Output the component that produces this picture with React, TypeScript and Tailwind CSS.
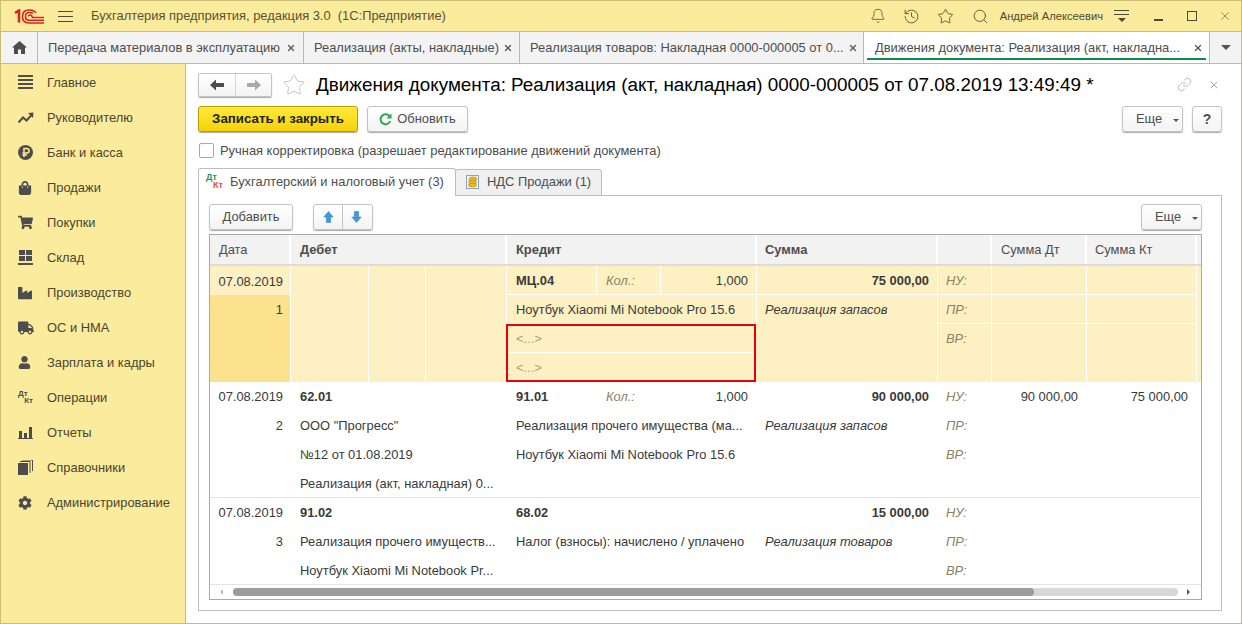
import { Bell, History, Link, Search, Star, X } from "lucide-react";
import { FaCog, FaIndustry, FaShoppingBag, FaShoppingCart, FaTruck, FaUser } from "react-icons/fa";
import type { ReactNode } from "react";

const cols = "grid grid-cols-[81px_78px_57px_81px_90px_64px_96px_181px_54px_95px_110px_1fr]";
const line = "flex items-center px-[9px] whitespace-nowrap overflow-hidden";
const lineR = "flex items-center justify-end pr-[8px] whitespace-nowrap";
const dateCell = "flex items-center justify-end pr-[8px] whitespace-nowrap";

function Bars() {
  return (
    <svg width="15" height="15" viewBox="0 0 15 15" fill="#4d4d4d">
      <rect x="0" y="0" width="15" height="2" />
      <rect x="0" y="4" width="15" height="2" />
      <rect x="0" y="8" width="15" height="2" />
      <rect x="0" y="12" width="15" height="2" />
    </svg>
  );
}

function Trend() {
  return (
    <svg width="16" height="12" viewBox="0 0 16 12" fill="none" stroke="#4d4d4d" strokeWidth="2">
      <path d="M0.5 10.5 L5 5.5 L8.5 8.5 L14 2.5" />
      <path d="M10 1 L15.5 0.5 L15 6 Z" fill="#4d4d4d" stroke="none" />
    </svg>
  );
}

function Ruble() {
  return (
    <svg width="15" height="15" viewBox="0 0 15 15">
      <circle cx="7.5" cy="7.5" r="7.5" fill="#4d4d4d" />
      <path d="M6 12 V3.5 H8.8 a2.2 2.2 0 0 1 0 4.6 H4.5 M4.5 10 H9" fill="none" stroke="#fbeb9d" strokeWidth="1.5" />
    </svg>
  );
}

function Warehouse() {
  return (
    <svg width="15" height="15" viewBox="0 0 15 15" fill="#4d4d4d">
      <rect x="1" y="0" width="6" height="5" />
      <rect x="8" y="0" width="6" height="5" />
      <rect x="1" y="6" width="6" height="5" />
      <rect x="8" y="6" width="6" height="5" />
      <rect x="0" y="13" width="15" height="2" />
    </svg>
  );
}

function Reports() {
  return (
    <svg width="15" height="13" viewBox="0 0 15 13" fill="#4d4d4d">
      <rect x="1" y="5" width="3" height="7" />
      <rect x="6" y="7" width="3" height="5" />
      <rect x="11" y="1" width="3" height="11" />
      <rect x="0" y="12" width="15" height="1" />
    </svg>
  );
}

function Books() {
  return (
    <svg width="15" height="15" viewBox="0 0 15 15">
      <rect x="0" y="3" width="10" height="12" fill="#4d4d4d" />
      <path d="M2 1.5 H12 V13 M4 0 H14.5 V11" fill="none" stroke="#4d4d4d" />
    </svg>
  );
}

function DtKtGray() {
  return (
    <div className="w-[15px] h-[15px] relative font-bold text-[8px] leading-none text-[#4d4d4d]">
      <span className="absolute left-0 top-0">Дт</span>
      <span className="absolute right-0 bottom-0">Кт</span>
    </div>
  );
}

function DtKtColor() {
  return (
    <div className="w-[17px] h-[17px] relative text-[9px] font-bold leading-none">
      <span className="absolute left-0 top-0 text-[#1d9a4e]">Дт</span>
      <span className="absolute right-0 bottom-0 text-[#e04b4b]">Кт</span>
    </div>
  );
}

function Logo() {
  return (
    <svg width="30" height="15" viewBox="0 0 30 15" fill="none" stroke="#d8231f" strokeWidth="1.6">
      <path d="M1 4 L5 1.5 V13.5" strokeWidth="2.6" />
      <path d="M22 4 C20 1 17 1 15 1 C10.5 1 8.5 4 8.5 7.5 C8.5 11 10.5 14 15 14 H30" />
      <path d="M19 4.5 C18 3.5 16.5 3.5 15 3.5 C12.5 3.5 11.5 5.5 11.5 7.5 C11.5 9.5 12.5 11.3 15 11.3 H30" />
      <path d="M14.5 7.5 C14.5 6.5 15 6 16 6 C17 6 18 6.5 18.5 8.5 H30" />
    </svg>
  );
}

function ArrowH({ dir, color }: { dir: "left" | "right"; color: string }) {
  return (
    <svg width="14" height="12" viewBox="0 0 14 12" fill={color}>
      {dir === "left" ? (
        <path d="M0 6 L6 0.5 V4 H14 V8 H6 V11.5 Z" />
      ) : (
        <path d="M14 6 L8 0.5 V4 H0 V8 H8 V11.5 Z" />
      )}
    </svg>
  );
}

function ArrowV({ dir }: { dir: "up" | "down" }) {
  return (
    <svg width="11" height="12" viewBox="0 0 12 14" fill="#3d9bdc" stroke="#2a7fbc" strokeWidth="0.6">
      {dir === "up" ? (
        <path d="M6 0.5 L11.5 7 H8.5 V13.5 H3.5 V7 H0.5 Z" />
      ) : (
        <path d="M6 13.5 L11.5 7 H8.5 V0.5 H3.5 V7 H0.5 Z" />
      )}
    </svg>
  );
}

function Refresh() {
  return (
    <svg width="13" height="13" viewBox="0 0 13 13" fill="none">
      <path d="M10.8 3.5 A5 5 0 1 0 11.3 8" stroke="#2ea84b" strokeWidth="2" />
      <path d="M12.5 0.5 V5.5 H7.5 Z" fill="#2ea84b" />
    </svg>
  );
}

function Coins() {
  return (
    <svg width="13" height="14" viewBox="0 0 13 14">
      <rect x="0.5" y="0.5" width="12" height="13" fill="#eef3f8" stroke="#8fa3b5" />
      <ellipse cx="7" cy="4" rx="4" ry="2" fill="#e8bb22" stroke="#a67d0c" strokeWidth="0.5" />
      <ellipse cx="6.5" cy="7" rx="4" ry="2" fill="#e8bb22" stroke="#a67d0c" strokeWidth="0.5" />
      <ellipse cx="6.5" cy="10" rx="4" ry="2" fill="#e8bb22" stroke="#a67d0c" strokeWidth="0.5" />
    </svg>
  );
}

function Btn({ className, children }: { className: string; children: ReactNode }) {
  return (
    <div
      className={`flex items-center justify-center rounded-[3px] border border-[#c4c4c4] bg-gradient-to-b from-white to-[#f3f3f3] shadow-[0_1px_1px_#a8a8a8] text-[#4d4d4d] ${className}`}
    >
      {children}
    </div>
  );
}

function More({ className }: { className: string }) {
  return (
    <Btn className={`gap-[11px] pl-[10px] ${className}`}>
      <span>Еще</span>
      <span className="mt-[2px] w-0 h-0 border-x-[3px] border-x-transparent border-t-[3px] border-t-[#555]" />
    </Btn>
  );
}

const menu: { label: string; icon: ReactNode }[] = [
  { label: "Главное", icon: <Bars /> },
  { label: "Руководителю", icon: <Trend /> },
  { label: "Банк и касса", icon: <Ruble /> },
  { label: "Продажи", icon: <FaShoppingBag size={14} color="#4d4d4d" /> },
  { label: "Покупки", icon: <FaShoppingCart size={15} color="#4d4d4d" /> },
  { label: "Склад", icon: <Warehouse /> },
  { label: "Производство", icon: <FaIndustry size={14} color="#4d4d4d" /> },
  { label: "ОС и НМА", icon: <FaTruck size={16} color="#4d4d4d" /> },
  { label: "Зарплата и кадры", icon: <FaUser size={13} color="#4d4d4d" /> },
  { label: "Операции", icon: <DtKtGray /> },
  { label: "Отчеты", icon: <Reports /> },
  { label: "Справочники", icon: <Books /> },
  { label: "Администрирование", icon: <FaCog size={14} color="#4d4d4d" /> },
];

const tabs = [
  { label: "Передача материалов в эксплуатацию", w: "w-[266px] pr-[7px]" },
  { label: "Реализация (акты, накладные)", w: "w-[216px] pr-[6px]" },
  { label: "Реализация товаров: Накладная 0000-000005 от 0...", w: "w-[344px] pr-[5px]" },
];

type Line = { deb: string; cred: string; qty?: string; sum?: string; note: string; tag: string; dt?: string; kt?: string };

const rows: { n: string; lines: Line[] }[] = [
  {
    n: "2",
    lines: [
      { deb: "62.01", cred: "91.01", qty: "1,000", sum: "90 000,00", note: "", tag: "НУ:", dt: "90 000,00", kt: "75 000,00" },
      { deb: 'ООО "Прогресс"', cred: "Реализация прочего имущества (ма...", note: "Реализация запасов", tag: "ПР:" },
      { deb: "№12 от 01.08.2019", cred: "Ноутбук Xiaomi Mi Notebook Pro 15.6", note: "", tag: "ВР:" },
      { deb: "Реализация (акт, накладная) 0...", cred: "", note: "", tag: "" },
    ],
  },
  {
    n: "3",
    lines: [
      { deb: "91.02", cred: "68.02", sum: "15 000,00", note: "", tag: "НУ:" },
      { deb: "Реализация прочего имуществ...", cred: "Налог (взносы): начислено / уплачено", note: "Реализация товаров", tag: "ПР:" },
      { deb: "Ноутбук Xiaomi Mi Notebook Pr...", cred: "", note: "", tag: "ВР:" },
    ],
  },
];

function PlainLine({ l, i, n, last }: { l: Line; i: number; n: string; last: boolean }) {
  const h = last ? "h-[28px] pt-px" : "h-[29px]";
  return (
    <div className={`${cols} ${h}`}>
      <div className={dateCell}>{i === 0 ? "07.08.2019" : i === 1 ? n : ""}</div>
      <div className={`${line} col-span-3 ${i === 0 ? "font-bold" : ""}`}>{l.deb}</div>
      {i === 0 ? (
        <>
          <div className={`${line} font-bold`}>{l.cred}</div>
          <div className={`${line} italic text-[#8a8262]`}>{l.qty ? "Кол.:" : ""}</div>
          <div className={`${line} justify-end`}>{l.qty}</div>
          <div className={`${line} justify-end font-bold`}>{l.sum}</div>
        </>
      ) : (
        <>
          <div className={`${line} col-span-3`}>{l.cred}</div>
          <div className="flex items-center pl-[8px] italic whitespace-nowrap">{l.note}</div>
        </>
      )}
      <div className="flex items-center pl-2 italic text-[#8a8262]">{l.tag}</div>
      <div className={`${line} justify-end`}>{l.dt}</div>
      <div className={`${line} justify-end`}>{l.kt}</div>
    </div>
  );
}

export default function App() {
  return (
    <div className="w-[1242px] h-[624px] overflow-hidden flex flex-col bg-white border border-[#c9bc74] font-['Liberation_Sans',Arial,sans-serif] text-[12.9px] text-[#3a3a3a]">
      {/* заголовок окна */}
      <div className="h-[31px] shrink-0 flex items-center bg-[#fbeb9d] border-b border-[#c9bc74] text-[#5a5230]">
        <div className="ml-[13px] w-[30px]">
          <Logo />
        </div>
        <svg className="ml-[14px]" width="15" height="13" viewBox="0 0 15 13" stroke="#4d4a36">
          <path d="M0 1.5 H15 M0 6.5 H15 M0 11.5 H15" />
        </svg>
        <span className="ml-[18px] whitespace-pre">Бухгалтерия предприятия, редакция 3.0  (1С:Предприятие)</span>
        <div className="ml-auto flex items-center text-[#4d4a36]">
          <Bell size={16} strokeWidth={1.2} />
          <History size={17} strokeWidth={1.2} className="ml-[17px]" />
          <Star size={17} strokeWidth={1.2} className="ml-[17px]" />
          <Search size={17} strokeWidth={1.2} className="ml-[18px]" />
          <span className="ml-[11px] text-[11.2px]">Андрей Алексеевич</span>
          <div className="ml-[11px] w-[15px] flex flex-col items-center gap-[3px]">
            <div className="w-[15px] h-px bg-[#4d4a36]" />
            <div className="w-[15px] h-px bg-[#4d4a36]" />
            <div className="w-0 h-0 border-x-[4px] border-x-transparent border-t-[4px] border-t-[#4d4a36]" />
          </div>
          <div className="ml-[25px] mt-[8px] w-[9px] h-[2px] bg-[#4d4a36]" />
          <div className="ml-[24px] w-[10px] h-[10px] border-[1.5px] border-[#4d4a36]" />
          <X size={14} strokeWidth={1} className="ml-[21px] mr-[9px]" />
        </div>
      </div>

      {/* вкладки */}
      <div className="h-[32px] shrink-0 flex bg-[#f3f3f3] border-b border-[#b8b8b8] text-[#4d4d4d]">
        <div className="w-[37px] flex items-center justify-center border-r border-[#b8b8b8]">
          <svg width="15" height="13" viewBox="0 0 15 13" fill="#4d4d4d">
            <path d="M7.5 0 L15 6.5 H13 V13 H9 V8.5 H6 V13 H2 V6.5 H0 Z" />
          </svg>
        </div>
        {tabs.map((t) => (
          <div key={t.label} className={`${t.w} pl-[10px] flex items-center justify-between border-r border-[#b8b8b8] whitespace-nowrap`}>
            <span>{t.label}</span>
            <X size={10} strokeWidth={3} color="#555" />
          </div>
        ))}
        <div className="w-[345px] relative flex items-center justify-between pl-[11px] pr-[6px] bg-white whitespace-nowrap">
          <span>Движения документа: Реализация (акт, накладна...</span>
          <X size={10} strokeWidth={3} color="#555" />
          <div className="absolute left-[3px] right-[3px] bottom-[3px] h-[2px] bg-[#0b8a4a]" />
        </div>
        <div className="flex-1 flex items-center justify-center border-l border-[#b8b8b8]">
          <div className="w-0 h-0 border-x-[5px] border-x-transparent border-t-[5px] border-t-[#555]" />
        </div>
      </div>

      <div className="flex-1 flex min-h-0">
        {/* левая панель */}
        <div className="w-[185px] shrink-0 bg-[#fbeb9d] border-r border-[#c9bc74] text-[#4a4530] py-px">
          {menu.map((m) => (
            <div key={m.label} className="h-[35px] flex items-center">
              <div className="w-[46px] pl-[17px] flex justify-start">{m.icon}</div>
              <span>{m.label}</span>
            </div>
          ))}
        </div>

        {/* форма */}
        <div className="flex-1 min-w-0 pl-[12px] pr-[19px] pt-[8px] flex flex-col">
          <div className="h-[25px] flex items-center">
            <div className="w-[74px] h-[24px] flex rounded-[2px] border border-[#c4c4c4] bg-gradient-to-b from-white to-[#f3f3f3] shadow-[0_1px_1px_#a8a8a8]">
              <div className="w-[37px] flex items-center justify-center border-r border-[#d4d4d4]">
                <ArrowH dir="left" color="#4d4d4d" />
              </div>
              <div className="flex-1 flex items-center justify-center">
                <ArrowH dir="right" color="#a9a9a9" />
              </div>
            </div>
            <Star size={24} strokeWidth={0.8} color="#b5b5b5" className="ml-[10px]" />
            <h1 className="ml-[10px] pt-px text-[18.85px] font-normal text-black whitespace-nowrap">
              Движения документа: Реализация (акт, накладная) 0000-000005 от 07.08.2019 13:49:49 *
            </h1>
            <Link size={15} strokeWidth={1.1} color="#9a9a9a" className="ml-auto mr-[16px]" />
            <X size={12} strokeWidth={1.1} color="#666" className="mr-[2px]" />
          </div>

          <div className="mt-[9px] h-[26px] flex">
            <div className="w-[160px] flex items-center justify-center rounded-[3px] border border-[#b7a000] bg-gradient-to-b from-[#ffe936] to-[#f5d300] shadow-[0_1px_1px_#a8a8a8] font-bold text-[13.3px] text-[#222]">
              Записать и закрыть
            </div>
            <Btn className="ml-[9px] w-[101px] gap-[5px]">
              <Refresh />
              <span>Обновить</span>
            </Btn>
            <More className="ml-auto w-[61px]" />
            <Btn className="ml-[9px] w-[30px] font-bold text-[14px]">?</Btn>
          </div>

          <div className="mt-[10px] h-[17px] flex items-center text-[#4d4d4d]">
            <div className="w-[15px] h-[15px] ml-[1px] rounded-[2px] border border-[#a9a9a9] bg-white" />
            <span className="ml-[6px]">Ручная корректировка (разрешает редактирование движений документа)</span>
          </div>

          <div className="mt-[9px] h-[28px] flex items-end text-[#4d4d4d] relative z-10">
            <div className="w-[258px] h-[28px] flex items-center pb-[2px] pl-[7px] gap-[7px] bg-white border border-b-0 border-[#bdbdbd] rounded-t-[3px] whitespace-nowrap">
              <DtKtColor />
              <span>Бухгалтерский и налоговый учет (3)</span>
            </div>
            <div className="w-[147px] -ml-px h-[27px] flex items-center pb-px pl-[10px] gap-[8px] bg-[#f0f0f0] border border-[#bdbdbd] rounded-t-[3px] whitespace-nowrap">
              <Coins />
              <span>НДС Продажи (1)</span>
            </div>
          </div>

          <div className="-mt-px h-[416px] shrink-0 border border-[#bdbdbd] pl-[10px] pr-[19px] pt-[8px]">
            <div className="h-[26px] flex">
              <Btn className="w-[84px]">Добавить</Btn>
              <div className="ml-[20px] w-[60px] flex rounded-[3px] border border-[#c4c4c4] bg-gradient-to-b from-white to-[#f3f3f3] shadow-[0_1px_1px_#a8a8a8]">
                <div className="w-[29px] flex items-center justify-center border-r border-[#c4c4c4]">
                  <ArrowV dir="up" />
                </div>
                <div className="flex-1 flex items-center justify-center pr-[2px]">
                  <ArrowV dir="down" />
                </div>
              </div>
              <More className="ml-auto w-[61px]" />
            </div>

            {/* таблица */}
            <div className="mt-[4px] h-[366px] border border-[#a9a9a9] text-[#3a3a3a]">
              <div className={`${cols} h-[31px] bg-[#f2f2f2] border-b-2 border-[#dcdcdc] text-[#4d4d4d]`}>
                <div className={`${line} border-r-2 border-white`}>Дата</div>
                <div className={`${line} col-span-3 border-r-2 border-white font-bold`}>Дебет</div>
                <div className={`${line} col-span-3 border-r-2 border-white font-bold`}>Кредит</div>
                <div className="flex items-center pl-[8px] border-r-2 border-white font-bold">Сумма</div>
                <div className="border-r-2 border-white" />
                <div className={`${line} border-r-2 border-white`}>Сумма Дт</div>
                <div className="flex items-center pl-[8px] border-r-2 border-white">Сумма Кт</div>
                <div />
              </div>

              {/* выделенная строка */}
              <div className={`${cols} grid-rows-[29px_29px_29px_29px] bg-[#fdf1c4] [&>div]:border-white`}>
                <div className={`${dateCell} !pr-[7px] pt-[2px] border-r`}>07.08.2019</div>
                <div className="row-span-4 border-r" />
                <div className="row-span-4 border-r" />
                <div className="row-span-4 border-r" />
                <div className={`${line} pt-[2px] font-bold border-r border-b`}>МЦ.04</div>
                <div className={`${line} pt-[2px] italic text-[#8a8262] border-r border-b`}>Кол.:</div>
                <div className={`${lineR} pt-[2px] border-r border-b`}>1,000</div>
                <div className={`${lineR} pt-[2px] font-bold border-r border-b`}>75 000,00</div>
                <div className="flex items-center pt-[2px] pl-2 italic text-[#8a8262] border-r border-b">НУ:</div>
                <div className="border-r border-b" />
                <div className="border-r border-b" />
                <div className="row-span-4" />

                <div className="row-span-3 flex justify-end pr-[7px] pt-[5px] bg-[#fde28e] border-r">1</div>
                <div className={`${line} pt-[2px] col-start-5 col-span-3 border-r border-b`}>Ноутбук Xiaomi Mi Notebook Pro 15.6</div>
                <div className="row-span-3 pl-[8px] pt-[5px] italic whitespace-nowrap border-r">Реализация запасов</div>
                <div className="flex items-center pt-[2px] pl-2 italic text-[#8a8262] border-r border-b">ПР:</div>
                <div className="border-r border-b" />
                <div className="border-r border-b" />

                <div className="col-start-5 col-span-3 row-span-2 flex flex-col border-2 !border-[#e8000b] -ml-px mr-px text-[#a89f7c]">
                  <div className="h-[27px] flex items-center pl-[8px] border-b border-white">&lt;...&gt;</div>
                  <div className="flex-1 flex items-center pt-[3px] pl-[8px]">&lt;...&gt;</div>
                </div>
                <div className="col-start-9 row-span-2 pt-[5px] pl-2 italic text-[#8a8262] border-r">ВР:</div>
                <div className="row-span-2 border-r" />
                <div className="row-span-2 border-r" />
              </div>

              {rows.map((r) => (
                <div key={r.n} className="border-b border-[#e3e3e3]">
                  {r.lines.map((l, i) => (
                    <PlainLine key={i} l={l} i={i} n={r.n} last={i === r.lines.length - 1} />
                  ))}
                </div>
              ))}

              {/* прокрутка */}
              <div className="h-[14px] flex items-center">
                <div className="ml-[10px] w-0 h-0 border-y-[3px] border-y-transparent border-r-[3px] border-r-[#bbb]" />
                <div className="ml-[10px] w-[945px] h-[8px] rounded-[4px] bg-[#d8d8d8]">
                  <div className="w-[801px] h-[8px] rounded-[4px] bg-[#9c9c9c]" />
                </div>
                <div className="ml-[9px] w-0 h-0 border-y-[3px] border-y-transparent border-l-[3px] border-l-[#555]" />
              </div>
            </div>
          </div>
        </div>
      </div>
    </div>
  );
}
